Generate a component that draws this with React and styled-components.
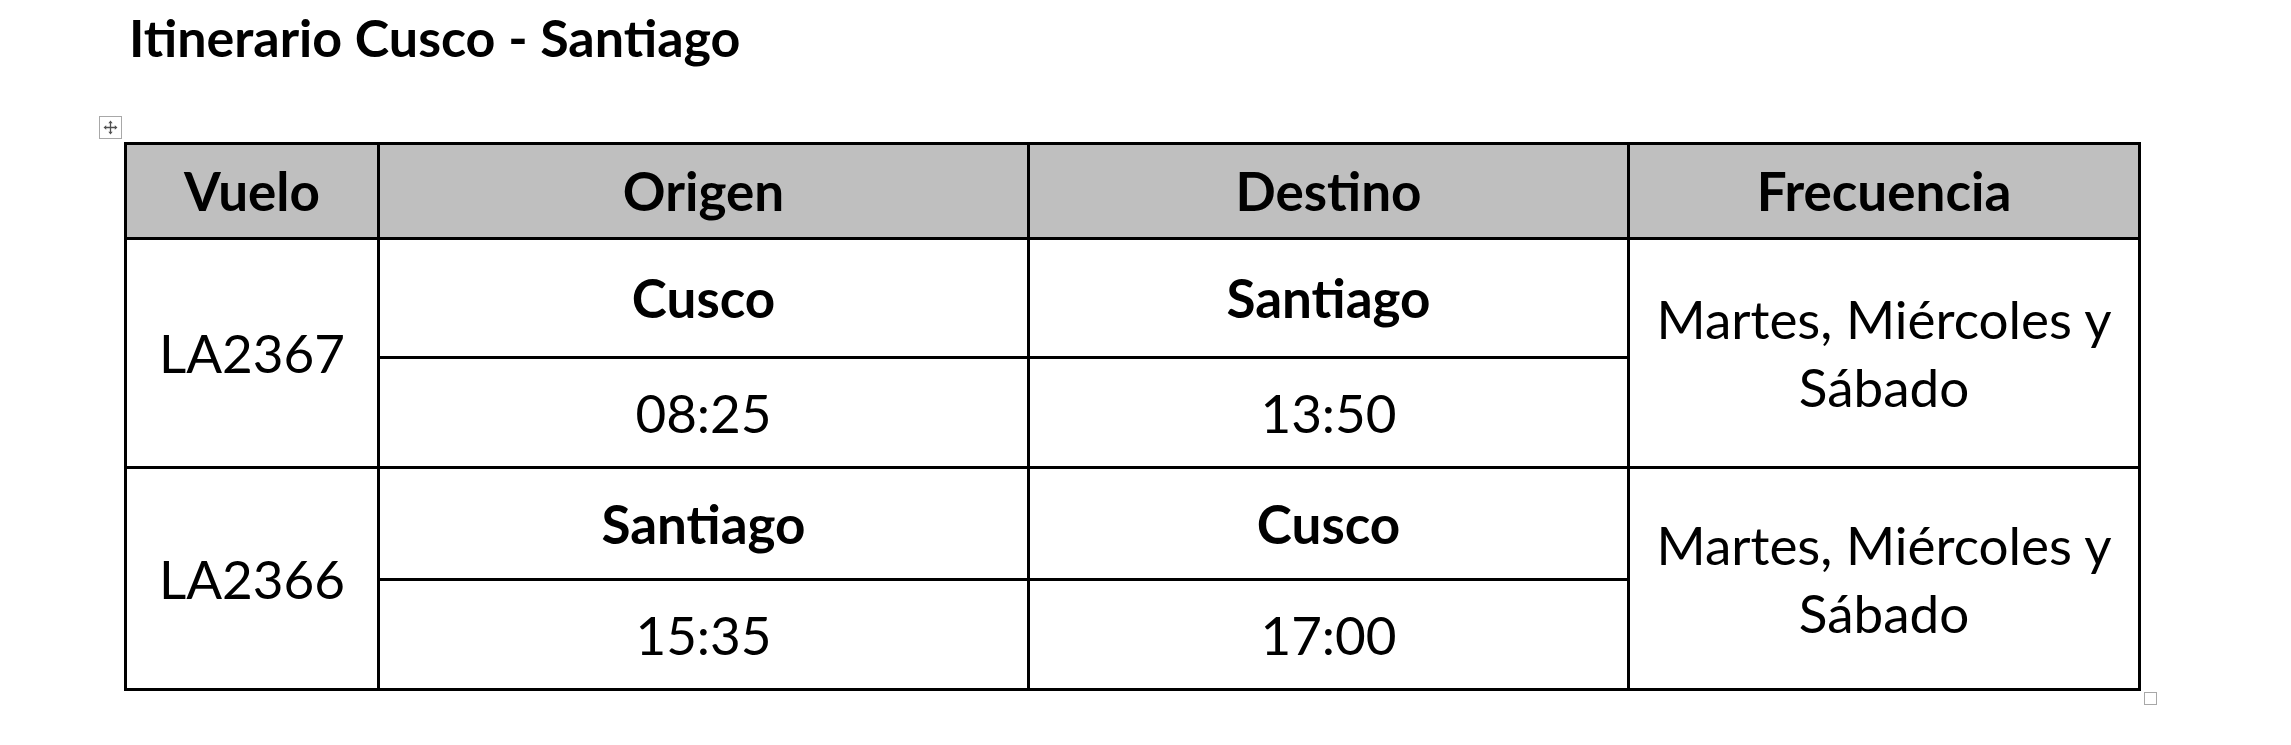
import React from "react";
import styled, { createGlobalStyle } from "styled-components";

const GlobalStyle = createGlobalStyle`
  html, body { margin: 0; padding: 0; background: #ffffff; }
  body { font-family: Lato, "Noto Sans", sans-serif; color: #000; }
`;

const Page = styled.div`
  box-sizing: border-box;
  width: 2291px;
  height: 745px;
  padding-left: 124px;
  overflow: hidden;
`;

const Title = styled.h1`
  margin: 0;
  padding: 6px 0 0 5px;
  font-size: 52px;
  line-height: 1.2;
  font-weight: 700;
`;

const TableArea = styled.div`
  position: relative;
  margin-top: 74px;
  width: max-content;
`;

const Grid = styled.div`
  display: grid;
  grid-template-columns: 250px 647px 597px 508px;
  grid-template-rows: 92px 116px 107px 109px 107px;
  gap: 3px;
  padding: 3px;
  background: #000;
`;

const Cell = styled.div`
  display: flex;
  align-items: center;
  justify-content: center;
  text-align: center;
  background: ${(p) => (p.$head ? "#bfbfbf" : "#ffffff")};
  font-size: 53px;
  line-height: 68px;
  font-weight: ${(p) => (p.$bold ? 700 : 400)};
  grid-row: ${(p) => (p.$span ? `span ${p.$span}` : "auto")};
`;

const MoveHandle = styled.div`
  position: absolute;
  left: -25px;
  top: -26px;
  width: 21px;
  height: 21px;
  border: 1px solid #a8a8a8;
  background: #fff;
  display: flex;
  align-items: center;
  justify-content: center;
`;

const ResizeHandle = styled.div`
  position: absolute;
  right: -16px;
  bottom: -14px;
  width: 11px;
  height: 11px;
  border: 1px solid #a8a8a8;
  background: #fff;
`;

const MoveIcon = () => (
  <svg width="15" height="15" viewBox="0 0 14 14">
    <path d="M7 2v10M2 7h10" stroke="#505050" strokeWidth="1.2" />
    <path d="M7 0.5L5 3h4z M7 13.5L5 11h4z M0.5 7L3 5v4z M13.5 7L11 5v4z" fill="#505050" />
  </svg>
);

const flights = [
  { code: "LA2367", from: "Cusco", to: "Santiago", dep: "08:25", arr: "13:50" },
  { code: "LA2366", from: "Santiago", to: "Cusco", dep: "15:35", arr: "17:00" },
];

export default function App() {
  return (
    <>
      <GlobalStyle />
      <Page>
        <Title>Itinerario Cusco - Santiago</Title>
        <TableArea>
          <MoveHandle>
            <MoveIcon />
          </MoveHandle>
          <Grid>
            <Cell $head $bold>Vuelo</Cell>
            <Cell $head $bold>Origen</Cell>
            <Cell $head $bold>Destino</Cell>
            <Cell $head $bold>Frecuencia</Cell>
            {flights.map((f) => (
              <React.Fragment key={f.code}>
                <Cell $span={2}>{f.code}</Cell>
                <Cell $bold>{f.from}</Cell>
                <Cell $bold>{f.to}</Cell>
                <Cell $span={2}>
                  Martes, Miércoles y
                  <br />
                  Sábado
                </Cell>
                <Cell>{f.dep}</Cell>
                <Cell>{f.arr}</Cell>
              </React.Fragment>
            ))}
          </Grid>
          <ResizeHandle />
        </TableArea>
      </Page>
    </>
  );
}
